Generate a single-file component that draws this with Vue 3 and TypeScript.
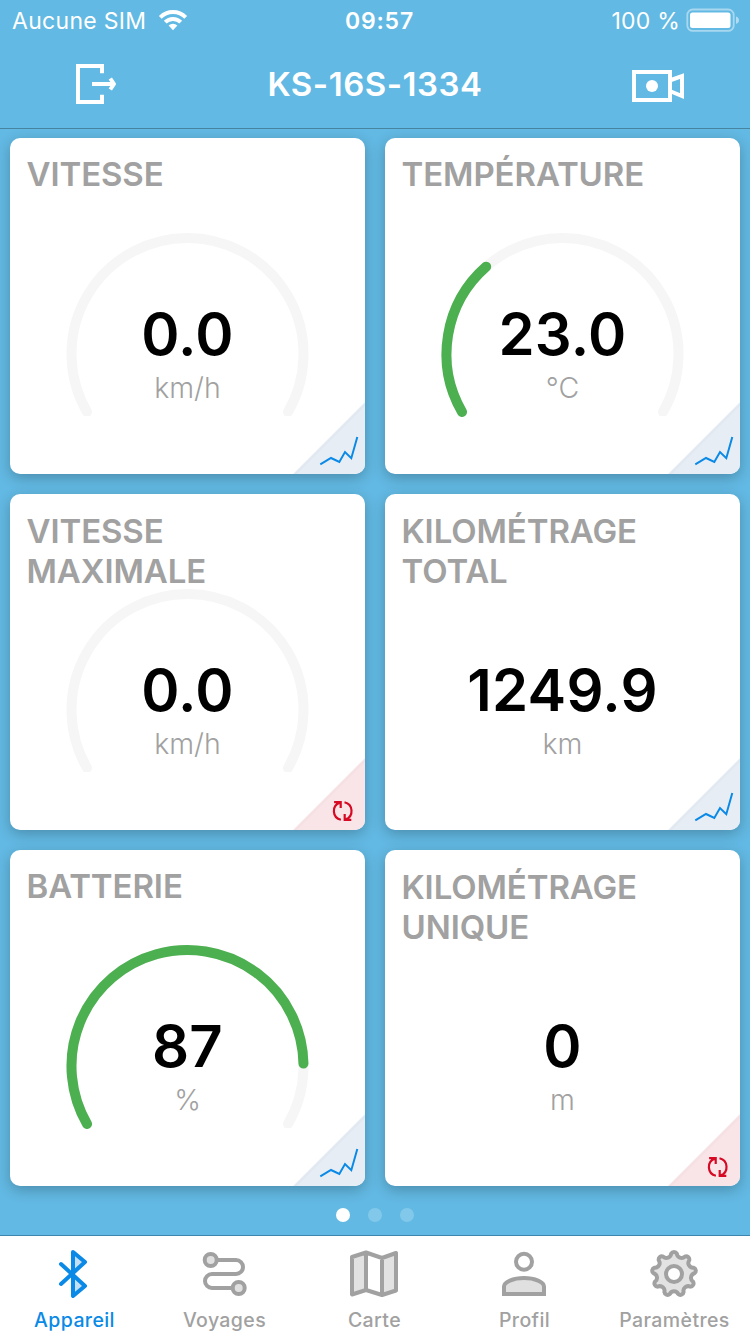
<script setup lang="ts">
interface Card {
  title: string[]
  value: string
  unit: string
  gauge?: number
  action: 'chart' | 'reset'
}

const cards: Card[] = [
  { title: ['VITESSE'], value: '0.0', unit: 'km/h', gauge: 0, action: 'chart' },
  { title: ['TEMPÉRATURE'], value: '23.0', unit: '°C', gauge: 23 / 70, action: 'chart' },
  { title: ['VITESSE', 'MAXIMALE'], value: '0.0', unit: 'km/h', gauge: 0, action: 'reset' },
  { title: ['KILOMÉTRAGE', 'TOTAL'], value: '1249.9', unit: 'km', action: 'chart' },
  { title: ['BATTERIE'], value: '87', unit: '%', gauge: 0.87, action: 'chart' },
  { title: ['KILOMÉTRAGE', 'UNIQUE'], value: '0', unit: 'm', action: 'reset' },
]

const CX = 177.5
const CY = 216
const R = 116

// Arc sweeping 240° clockwise from the lower left
function arc(fraction: number): string {
  const at = (deg: number): string => {
    const a = (deg * Math.PI) / 180
    return `${(CX + R * Math.cos(a)).toFixed(2)} ${(CY + R * Math.sin(a)).toFixed(2)}`
  }
  const sweep = 240 * fraction
  return `M${at(150)}A${R} ${R} 0 ${sweep > 180 ? 1 : 0} 1 ${at(150 + sweep)}`
}

function gearPath(cx: number, cy: number, teeth: number): string {
  const p = (deg: number): string => {
    const a = ((deg - 90) * Math.PI) / 180
    return `${(cx + 20.5 * Math.cos(a)).toFixed(2)} ${(cy + 20.5 * Math.sin(a)).toFixed(2)}`
  }
  const step = 360 / teeth
  let d = `M${p(-8)}`
  for (let i = 0; i < teeth; i++) {
    d += `A3.2 3.2 0 0 1 ${p(i * step + 8)}A4.7 4.7 0 0 0 ${p((i + 1) * step - 8)}`
  }
  return d + 'Z'
}

const gear = gearPath(29, 30, 9)
const tabs = ['Appareil', 'Voyages', 'Carte', 'Profil', 'Paramètres']
</script>

<template>
  <div class="screen">
    <header class="top">
      <div class="status">
        <div class="carrier">
          <span class="sim">Aucune SIM</span>
          <svg width="30" height="22" viewBox="0 0 30 22">
            <path d="M2.27 8.27A18 18 0 0 1 27.73 8.27M7.22 13.22A11 11 0 0 1 22.78 13.22" fill="none" stroke="#fff" stroke-width="3.9" />
            <path d="M15 21.2L10.6 16.6A6.3 6.3 0 0 1 19.4 16.6Z" fill="#fff" />
          </svg>
        </div>
        <span class="clock">09:57</span>
        <div class="power">
          <span class="percent">100 %</span>
          <svg width="54" height="24" viewBox="0 0 54 24">
            <rect x="1.3" y="1.5" width="46.4" height="21.4" rx="5.5" fill="none" stroke="#fff" stroke-opacity=".45" stroke-width="1.8" />
            <rect x="4" y="4.5" width="40.5" height="15.5" rx="2.5" fill="#fff" />
            <path d="M50 8.5Q53 9.5 53 12.2T50 15.9Z" fill="#fff" fill-opacity=".5" />
          </svg>
        </div>
      </div>
      <div class="nav">
        <svg width="60" height="60" viewBox="66 54 60 60" fill="none" stroke="#fff" stroke-width="4">
          <path d="M102 73.3V66H78V102H102V94.7M92 84H113" />
          <path d="M110.3 78.5L114 84L110.3 89.5" stroke-linejoin="round" />
        </svg>
        <h1>KS-16S-1334</h1>
        <svg width="60" height="60" viewBox="628 54 60 60" fill="none" stroke="#fff" stroke-width="4">
          <rect x="634" y="72" width="36" height="28" />
          <path d="M671 80L682 76V96L671 91.5" />
          <circle cx="652" cy="86" r="6" fill="#fff" stroke="none" />
        </svg>
      </div>
    </header>

    <main class="cards">
      <section v-for="(card, i) in cards" :key="i" class="card">
        <svg v-if="card.gauge !== undefined" class="layer" width="355" height="336" viewBox="0 0 355 336" fill="none" stroke-width="10" stroke-linecap="round">
          <clipPath :id="'track' + i"><rect width="355" height="278" /></clipPath>
          <path :d="arc(1)" stroke="#f6f6f6" :clip-path="`url(#track${i})`" />
          <path v-if="card.gauge > 0" :d="arc(card.gauge)" stroke="#4caf50" />
        </svg>
        <h2 class="layer" :class="{ double: card.title.length > 1 }">
          <span v-for="line in card.title" :key="line">{{ line }}</span>
        </h2>
        <div class="layer reading">
          <span class="value">{{ card.value }}</span>
          <span class="unit">{{ card.unit }}</span>
        </div>
        <svg class="layer corner" width="72" height="72" viewBox="0 0 72 72" fill="none">
          <template v-if="card.action === 'chart'">
            <path d="M0 72L72 0V72Z" fill="#e7edf5" />
            <path d="M1 72L72 1V4L4 72Z" fill="#000" fill-opacity=".02" />
            <path d="M27.3 62.3L38 56L46.3 60L52 50L58.3 56.2L64.3 35" stroke="#0a8ae6" stroke-width="2" />
          </template>
          <template v-else>
            <path d="M0 72L72 0V72Z" fill="#f9e5e8" />
            <path d="M1 72L72 1V4L4 72Z" fill="#000" fill-opacity=".015" />
            <g transform="translate(49.7 53)" stroke="#d60a24" stroke-width="2.2">
              <path d="M-1.8 8.8A9 9 0 0 1 -3 -8.4M-8.6 -8.8H-2V-3" />
              <path d="M1.8 -8.8A9 9 0 0 1 3 8.4M8.6 8.8H2V3" />
            </g>
          </template>
        </svg>
      </section>
    </main>

    <div class="pager"><i class="on"></i><i></i><i></i></div>

    <nav class="tabs">
      <div v-for="(tab, i) in tabs" :key="tab" class="tab" :class="{ active: i === 0 }">
        <svg width="60" height="60" viewBox="0 0 60 60" fill="none" stroke="currentColor" stroke-width="4" stroke-linejoin="round">
          <template v-if="i === 0">
            <path d="M28 8L40 18L28 30ZM28 30L40 42L28 52Z" fill="#c5e0f5" stroke="none" />
            <path d="M16 20L40 42L28 52V8L40 18L16 40" stroke-linecap="round" />
          </template>
          <template v-else-if="i === 1">
            <path d="M22 16H41a7 7 0 0 1 0 14H17a7 7 0 0 0 0 14H38" />
            <circle cx="15.7" cy="16" r="6" fill="#e0e0e0" />
            <circle cx="43.7" cy="44" r="6" fill="#e0e0e0" />
          </template>
          <template v-else-if="i === 2">
            <path d="M7 13L21 8.5V46L7 50.5ZM37 14L51 9V46.5L37 51Z" fill="#e2e2e2" stroke="none" />
            <path d="M7 13L21 8.5L37 14L51 9V46.5L37 51L21 46L7 50.5ZM21 8.5V46M37 14V51" />
          </template>
          <template v-else-if="i === 3">
            <circle cx="29" cy="17.7" r="8" />
            <path d="M9 50V42.5C9 38 18 34 29 34S49 38 49 42.5V50Z" fill="#e0e0e0" stroke-linejoin="miter" />
          </template>
          <template v-else>
            <path :d="gear" fill="#e2e2e2" />
            <circle cx="29" cy="30" r="8" fill="#fff" />
          </template>
        </svg>
        <span>{{ tab }}</span>
      </div>
    </nav>
  </div>
</template>

<style>
body {
  margin: 0;
}
</style>

<style scoped>
.screen {
  width: 750px;
  height: 1334px;
  display: flex;
  flex-direction: column;
  overflow: hidden;
  background: #62b9e3;
  font-family: Inter, 'Liberation Sans', sans-serif;
}
.top {
  height: 128px;
  border-bottom: 1px solid #47849f;
  color: #fff;
}
.status {
  height: 40px;
  display: grid;
  grid-template-columns: 1fr 70px 1fr;
  align-items: center;
  line-height: 38px;
  font-size: 23px;
}
.status span {
  padding-top: 2px;
}
.carrier,
.power {
  display: flex;
  align-items: center;
}
.carrier {
  gap: 12px;
  padding-left: 12px;
}
.power {
  justify-content: flex-end;
  gap: 6px;
  padding-right: 10px;
}
.sim {
  letter-spacing: 0.3px;
}
.percent {
  letter-spacing: 0.2px;
}
.clock {
  padding-left: 5px;
  font-weight: 600;
  letter-spacing: 0.8px;
}
.nav {
  height: 88px;
  display: flex;
  align-items: center;
  justify-content: space-between;
  padding: 0 62px 0 66px;
}
h1,
h2 {
  margin: 0;
  font-weight: 600;
}
h1 {
  padding-right: 4px;
  font-size: 33px;
  line-height: 88px;
  letter-spacing: 0.5px;
}
.cards {
  display: grid;
  grid-template-columns: 355px 355px;
  grid-auto-rows: 336px;
  gap: 20px;
  padding: 9px 10px 0;
}
.card {
  display: grid;
  grid-template: 336px / 355px;
  border-radius: 10px;
  background: #fff;
  box-shadow: 0 4px 14px rgba(0, 0, 0, 0.24);
}
.layer {
  grid-area: 1 / 1;
}
h2 {
  display: flex;
  flex-direction: column;
  padding: 16px 0 0 16.5px;
  color: #a1a1a1;
  font-size: 33px;
  line-height: 40px;
  letter-spacing: -0.1px;
}
.double {
  padding-top: 17px;
}
.reading {
  display: flex;
  flex-direction: column;
  align-items: center;
  padding-top: 161px;
}
.value {
  font-size: 58px;
  font-weight: 600;
  line-height: 70px;
  letter-spacing: 0.3px;
  color: #000;
}
.unit {
  margin-top: 2px;
  font-size: 28.5px;
  font-weight: 300;
  line-height: 34px;
  color: #a1a1a1;
}
.corner {
  place-self: end;
  border-bottom-right-radius: 10px;
}
.pager {
  height: 49px;
  flex-shrink: 0;
  display: flex;
  justify-content: center;
  gap: 18px;
  padding-top: 22px;
  box-sizing: border-box;
}
.pager i {
  width: 14px;
  height: 14px;
  border-radius: 50%;
  background: #82c8ea;
}
.pager .on {
  background: #fff;
}
.tabs {
  flex: 1;
  display: grid;
  grid-template-columns: repeat(5, 1fr);
  border-top: 1px solid #3f86ae;
  background: #fff;
}
.tab {
  display: flex;
  flex-direction: column;
  align-items: center;
  padding-top: 8px;
  color: #a1a1a1;
  font-size: 19.5px;
  font-weight: 500;
  letter-spacing: 0.4px;
}
.tab span {
  padding: 2px 1px 0 0;
  line-height: 28px;
}
.active {
  color: #0a8ae6;
}
</style>
